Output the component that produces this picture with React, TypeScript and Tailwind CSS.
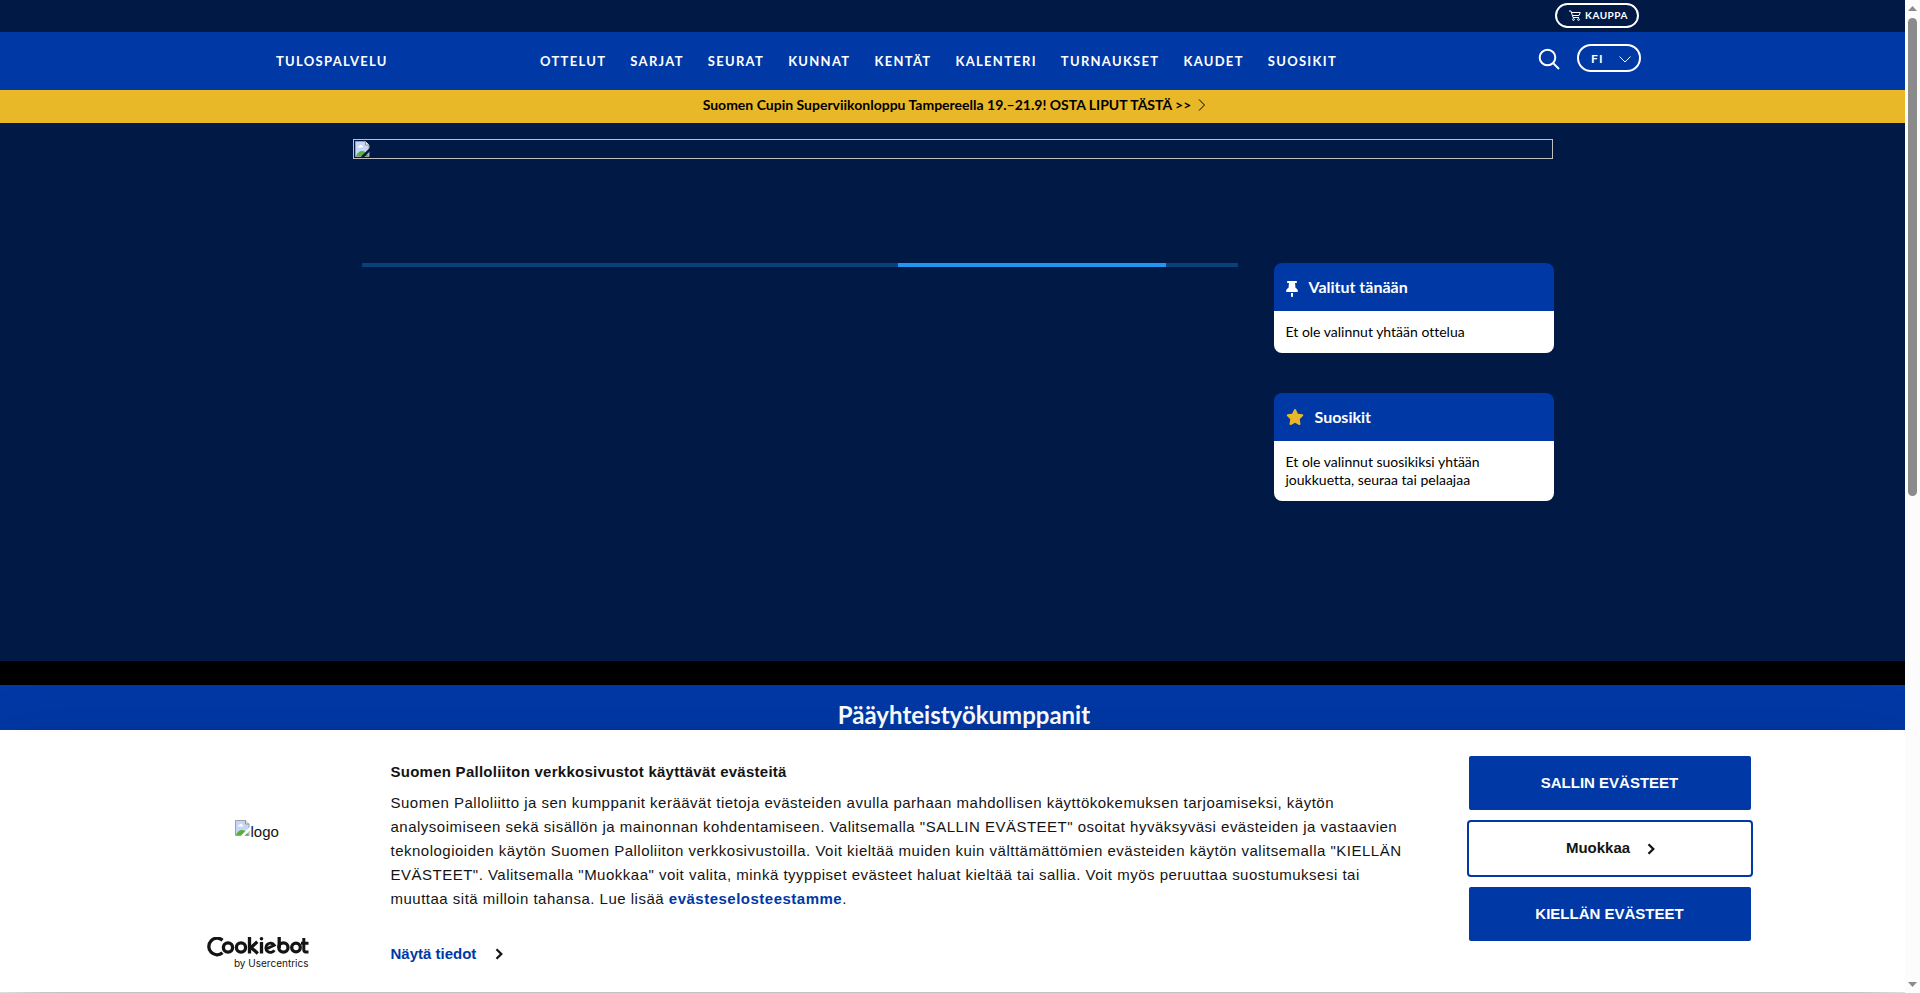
import React from "react";

const links = ["OTTELUT", "SARJAT", "SEURAT", "KUNNAT", "KENTÄT", "KALENTERI", "TURNAUKSET", "KAUDET", "SUOSIKIT"];

function BrokenImage({ cut }: { cut: string }) {
  return (
    <svg className="size-4 shrink-0" viewBox="0 0 16 16" aria-hidden="true">
      <path d="M0.500 0.500H10.500L14 4V15.500H0.500Z" fill="#c5d6f7" stroke="#a0a0a0" />
      <path d="M3 6c0-1 1-1.500 1.800-1.200C5.200 3.500 7 3.500 7.300 5 8.500 5 8.500 6.500 7.500 6.500H3.500C3.200 6.500 3 6.300 3 6z" fill="#fff" />
      <path d="M1 15c1-3 3.500-5 6-5s5 2 6.500 5z" fill="#5bae3c" />
      <path d="M10.500 0.500V4H14" fill="#f4f4f4" stroke="#909090" />
      <path d="M7 16.500L15.500 8" stroke={cut} strokeWidth="2.500" />
    </svg>
  );
}

function Chevron() {
  return (
    <svg className="h-3 w-2" viewBox="0 0 8 12" fill="none" stroke="#141414" strokeWidth="2.300" aria-hidden="true">
      <path d="M1.500 1.200L6.300 6L1.500 10.800" />
    </svg>
  );
}

function Card({ title, text, icon }: { title: string; text: string; icon: React.ReactNode }) {
  return (
    <section>
      <h2 className="flex h-12 items-center gap-[11px] rounded-t-lg bg-[#0038a5] px-3 text-base font-bold text-white">
        {icon}
        {title}
      </h2>
      <p className="rounded-b-lg bg-white p-3 text-sm leading-[18px] text-black">{text}</p>
    </section>
  );
}

function CookieDialog() {
  return (
    <div
      role="dialog"
      aria-label="Evästeet"
      className="absolute inset-x-0 bottom-px flex h-[262px] justify-center bg-white font-['Liberation_Sans',Arial,sans-serif] text-[15px] text-[#141414] shadow-[0_32px_68px_rgba(0,0,0,0.3)]"
    >
      <div className="flex w-full max-w-[1600px] pl-[54px]">
        <div className="flex w-[184px] shrink-0 flex-col justify-between pb-[23px]">
          <div className="flex items-start pt-[90px] pl-7 leading-6">
            <BrokenImage cut="#ffffff" />
            <span>logo</span>
          </div>
          <a href="#cookiebot" className="flex w-[102px] flex-col items-end" aria-label="Cookiebot by Usercentrics">
            <svg className="h-5 w-[102px]" viewBox="0 1 102 20" fill="none" stroke="#141414" strokeWidth="3.300" aria-hidden="true">
              <path d="M15.500 4.200A8.300 8.300 0 1 0 15.500 16.800" />
              <circle cx="21" cy="11.500" r="4.600" />
              <circle cx="34" cy="11.500" r="4.600" />
              <path d="M42.500 1V17.500M50.300 5.800L44 11.400L50.800 17.500" />
              <path d="M54.500 6V17.500" />
              <circle cx="54.500" cy="2.800" r="1.800" fill="#141414" stroke="none" />
              <path d="M59.800 12.800L67.300 9.200A4.600 4.600 0 1 0 67.400 14.200" strokeWidth="2.900" />
              <path d="M72.200 1V12" />
              <circle cx="76.400" cy="11.500" r="4.600" />
              <circle cx="89" cy="11.500" r="4.300" />
              <path d="M96.800 2V13.500Q96.800 16 99 16H101.500M94 7.300H101.500" strokeWidth="3" />
            </svg>
            <span className="font-[Inter,sans-serif] text-[10px] leading-3">by Usercentrics</span>
          </a>
        </div>
        <div className="flex min-w-0 flex-1 flex-col">
          <h2 className="pt-[30px] leading-6 font-bold tracking-[0.017em]">Suomen Palloliiton verkkosivustot käyttävät evästeitä</h2>
          <p className="max-w-[1020px] pt-[7px] leading-6 tracking-[0.033em]">
            Suomen Palloliitto ja sen kumppanit keräävät tietoja evästeiden avulla parhaan mahdollisen käyttökokemuksen
            tarjoamiseksi, käytön analysoimiseen sekä sisällön ja mainonnan kohdentamiseen. Valitsemalla "SALLIN
            EVÄSTEET" osoitat hyväksyväsi evästeiden ja vastaavien teknologioiden käytön Suomen Palloliiton
            verkkosivustoilla. Voit kieltää muiden kuin välttämättömien evästeiden käytön valitsemalla "KIELLÄN
            EVÄSTEET". Valitsemalla "Muokkaa" voit valita, minkä tyyppiset evästeet haluat kieltää tai sallia. Voit
            myös peruuttaa suostumuksesi tai muuttaa sitä milloin tahansa. Lue lisää{" "}
            <a href="#evasteseloste" className="font-bold text-[#0038a5]">evästeselosteestamme</a>.
          </p>
          <a href="#tiedot" className="mt-[31px] flex items-center gap-[19px] leading-6 font-bold text-[#0038a5]">
            Näytä tiedot
            <Chevron />
          </a>
        </div>
        <div className="flex w-[286px] shrink-0 flex-col gap-[10px] pt-[26px] text-[15px] font-bold">
          <button className="mx-[2px] h-[54px] rounded-xs bg-[#0038a5] text-white">SALLIN EVÄSTEET</button>
          <button className="flex h-[57px] items-center justify-center gap-[17px] rounded border-2 border-[#0038a5] bg-white pl-[2px]">
            Muokkaa
            <Chevron />
          </button>
          <button className="mx-[2px] h-[54px] rounded-xs bg-[#0038a5] text-white">KIELLÄN EVÄSTEET</button>
        </div>
      </div>
    </div>
  );
}

export default function App() {
  return (
    <div className="flex h-screen overflow-hidden bg-[#001a45] font-[Lato,sans-serif] [font-variant-ligatures:none]">
      <div className="relative flex min-w-0 flex-1 flex-col overflow-hidden">
        <header>
          <div className="flex h-8 justify-end bg-[#001a45] pt-[3px] pr-[266px]">
            <a href="#kauppa" className="flex h-[25px] w-[84px] items-center justify-center gap-1 rounded-full border-2 border-white pl-[3px] text-[10px] font-bold tracking-wider text-white">
              <svg className="h-[11px] w-3" viewBox="0 0 12 11" fill="none" stroke="#fff" aria-hidden="true">
                <path d="M0 1H2L4 7.500H10M2.500 2.500H11.300L10 5.500H3.500" />
                <circle cx="4.500" cy="9.500" r="0.900" />
                <circle cx="9.500" cy="9.500" r="0.900" />
              </svg>
              KAUPPA
            </a>
          </div>
          <div className="flex h-[58px] bg-[#0038a5] pr-[264px] pl-[276px] text-white">
            <a href="#tulospalvelu" className="w-[264px] pt-px text-[13px] leading-[56px] font-bold tracking-widest">TULOSPALVELU</a>
            <nav className="flex flex-1 gap-6 pt-px text-[13px] leading-[56px] font-bold tracking-widest">
              {links.map((l) => (
                <a key={l} href={"#" + l.toLowerCase()}>{l}</a>
              ))}
            </nav>
            <div className="flex items-start gap-[17px] pt-3">
              <button aria-label="Haku" className="pt-1">
                <svg className="size-[22px]" viewBox="0 0 22 22" fill="none" stroke="#fff" strokeWidth="2" aria-hidden="true">
                  <circle cx="9.500" cy="9.500" r="7.800" />
                  <path d="M15 15L21 21" />
                </svg>
              </button>
              <div className="relative">
                <select aria-label="Kieli" className="h-7 w-16 appearance-none rounded-full border-2 border-white bg-[#0038a5] pt-px pl-3 text-xs font-bold tracking-widest text-white">
                  <option>FI</option>
                  <option>SV</option>
                  <option>EN</option>
                </select>
                <svg className="pointer-events-none absolute top-3 right-[10px] h-[7px] w-3" viewBox="0 0 12 7" fill="none" stroke="#fff" aria-hidden="true">
                  <path d="M0.500 0.500L6 6L11.500 0.500" />
                </svg>
              </div>
            </div>
          </div>
          <a href="#liput" className="flex h-[33px] justify-center gap-[7px] bg-[#e9b829] pt-[6px] pl-1 text-sm leading-[18px] font-bold text-black">
            Suomen Cupin Superviikonloppu Tampereella 19.–21.9! OSTA LIPUT TÄSTÄ &gt;&gt;
            <svg className="mt-[3px] h-3 w-2" viewBox="0 0 8 12" fill="none" stroke="#000" aria-hidden="true">
              <path d="M1 0.500L6.500 6L1 11.500" />
            </svg>
          </a>
        </header>
        <main className="h-[538px] shrink-0 pt-4">
          <div className="mx-auto max-w-[1200px]">
            <div className="flex h-5 border border-[#c0c0c0] p-px">
              <BrokenImage cut="#001a45" />
            </div>
            <div className="mt-[104px] flex items-start gap-9 pl-[9px]">
              <div role="progressbar" aria-label="Ladataan" className="flex h-1 flex-1 bg-[#0a3f79] pl-[536px]">
                <div className="w-[268px] bg-[#2196f3]" />
              </div>
              <aside className="-mr-px flex w-[280px] flex-col gap-10">
                <Card
                  title="Valitut tänään"
                  text="Et ole valinnut yhtään ottelua"
                  icon={
                    <svg className="mt-1 h-4 w-3" viewBox="0 0 384 512" fill="#fff" aria-hidden="true">
                      <path d="M32 32C32 14 46 0 64 0H320c18 0 32 14 32 32s-14 32-32 32H290l12 148c37 20 66 53 79 94l1 3c3 10 2 20-4 29s-16 14-26 14H32c-10 0-20-5-26-14s-8-19-4-29l1-3c13-41 42-74 79-94L94 64H64C46 64 32 50 32 32zM160 384h64v96c0 18-14 32-32 32s-32-14-32-32V384z" />
                    </svg>
                  }
                />
                <Card
                  title="Suosikit"
                  text="Et ole valinnut suosikiksi yhtään joukkuetta, seuraa tai pelaajaa"
                  icon={
                    <svg className="h-4 w-[18px]" viewBox="0 0 576 512" fill="#e9b829" aria-hidden="true">
                      <path d="M316.900 18C311.600 7 300.400 0 288.100 0s-23.400 7-28.800 18L195 150.300 51.400 171.500c-12 1.800-22 10.200-25.700 21.700s-.7 24.200 7.900 32.700L137.800 329 113.200 474.700c-2 12 3 24.200 12.900 31.300s23 8 33.800 2.300l128.300-68.500 128.300 68.500c10.800 5.700 23.900 4.900 33.800-2.300s14.900-19.300 12.900-31.300L438.500 329 542.700 225.900c8.600-8.500 11.700-21.200 7.900-32.700s-13.700-19.900-25.700-21.700L381.200 150.300 316.900 18z" />
                    </svg>
                  }
                />
              </aside>
            </div>
          </div>
        </main>
        <div className="h-6 shrink-0 bg-black" />
        <footer className="flex-1 bg-[#0038a5] pt-[14px] pl-[23px] text-center">
          <h2 className="text-2xl font-bold text-white">Pääyhteistyökumppanit</h2>
        </footer>
        <div className="h-px shrink-0 bg-white" />
        <CookieDialog />
      </div>
      <div className="flex w-[15px] shrink-0 flex-col items-center justify-between bg-[#fcfcfc] py-[6px]" aria-hidden="true">
        <div className="flex flex-1 flex-col items-center gap-[7px]">
          <svg className="h-[5px] w-[9px]" viewBox="0 0 9 5" fill="#8b8b8b"><path d="M4.500 0L9 5H0Z" /></svg>
          <div className="h-[49%] w-[9px] rounded-full bg-[#8b8b8b]" />
        </div>
        <svg className="h-[5px] w-[9px]" viewBox="0 0 9 5" fill="#8b8b8b"><path d="M0 0H9L4.500 5Z" /></svg>
      </div>
    </div>
  );
}
